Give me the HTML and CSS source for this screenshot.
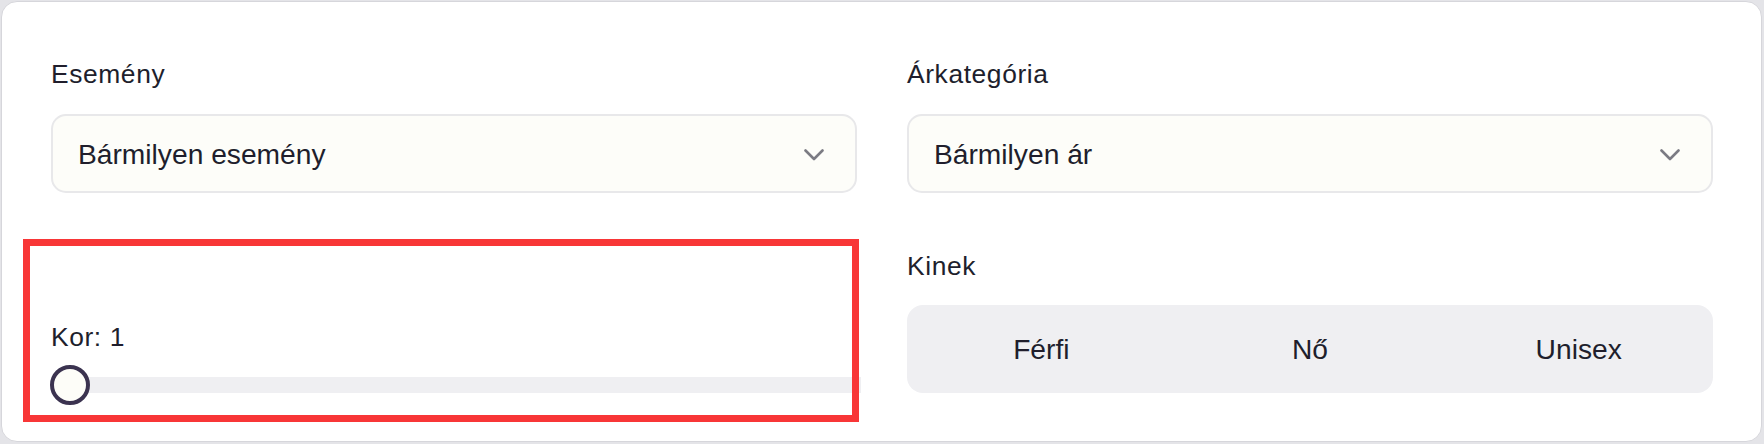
FILE: index.html
```html
<!DOCTYPE html>
<html lang="hu">
<head>
<meta charset="utf-8">
<title>Szűrők</title>
<link rel="stylesheet" href="styles.css">
</head>
<body>
<div class="card">
  <div class="grid">
    <div class="field">
      <div class="label">Esemény</div>
      <div class="select">
        <span class="value">Bármilyen esemény</span>
        <svg class="chev" width="20" height="12" viewBox="0 0 20 12"><polyline points="1.5,1.5 10,10 18.5,1.5" fill="none" stroke="#7b7b83" stroke-width="2.6" stroke-linecap="round" stroke-linejoin="round"/></svg>
      </div>
    </div>
    <div class="field">
      <div class="label">Árkategória</div>
      <div class="select">
        <span class="value">Bármilyen ár</span>
        <svg class="chev" width="20" height="12" viewBox="0 0 20 12"><polyline points="1.5,1.5 10,10 18.5,1.5" fill="none" stroke="#7b7b83" stroke-width="2.6" stroke-linecap="round" stroke-linejoin="round"/></svg>
      </div>
    </div>
    <div class="field age">
      <div class="highlight"></div>
      <div class="label">Kor: 1</div>
      <div class="slider">
        <div class="track"></div>
        <div class="thumb"></div>
      </div>
    </div>
    <div class="field">
      <div class="label label-seg">Kinek</div>
      <div class="segmented">
        <div class="seg">Férfi</div>
        <div class="seg">Nő</div>
        <div class="seg">Unisex</div>
      </div>
    </div>
  </div>
</div>
</body>
</html>
```
FILE: styles.css
```css
html, body {
  margin: 0;
  padding: 0;
}
body {
  background: #e4e4e8;
  width: 1764px;
  height: 444px;
  overflow: hidden;
  font-family: "Liberation Sans", Arial, sans-serif;
  color: #201e2c;
}
.card {
  box-sizing: border-box;
  margin: 1px 0 0 1px;
  width: 1761px;
  height: 441px;
  background: #ffffff;
  border: 1px solid #d6d6db;
  border-radius: 16px;
  padding: 57px 48px 0 49px;
}
.grid {
  display: grid;
  grid-template-columns: 1fr 1fr;
  column-gap: 50px;
  row-gap: 58px;
}
.field {
  display: flex;
  flex-direction: column;
  position: relative;
}
.label {
  font-size: 26.4px;
  letter-spacing: 0.6px;
  line-height: 31px;
  height: 31px;
  margin-bottom: 24px;
}
.label-seg {
  margin-bottom: 23px;
}
.select {
  box-sizing: border-box;
  height: 79px;
  border: 2px solid #e8e8ea;
  border-radius: 15px;
  background: #fdfdf9;
  display: flex;
  align-items: center;
  justify-content: space-between;
  padding: 0 31px 0 25px;
}
.value {
  font-size: 28.2px;
  line-height: 36px;
}
.chev {
  display: block;
  margin-top: 2px;
}
.age {
  padding-top: 71px;
}
.age .label {
  margin-bottom: 12px;
}
.slider {
  position: relative;
  height: 40px;
}
.track {
  margin-top: 12px;
  margin-right: -4px;
  height: 16px;
  background: #efeff2;
  border-radius: 8px 0 0 8px;
}
.thumb {
  position: absolute;
  left: -1px;
  top: 0;
  box-sizing: border-box;
  width: 40px;
  height: 40px;
  border-radius: 50%;
  border: 4px solid #3b3350;
  background: #fdfdf8;
}
.highlight {
  position: absolute;
  z-index: 1;
  top: -12px;
  left: -28px;
  right: -2px;
  bottom: -17px;
  border: 7px solid #f83637;
  pointer-events: none;
}
.segmented {
  height: 88px;
  border-radius: 16px;
  background: #efeff2;
  display: flex;
}
.seg {
  flex: 1;
  display: flex;
  align-items: center;
  justify-content: center;
  font-size: 28.2px;
  line-height: 36px;
}
```
